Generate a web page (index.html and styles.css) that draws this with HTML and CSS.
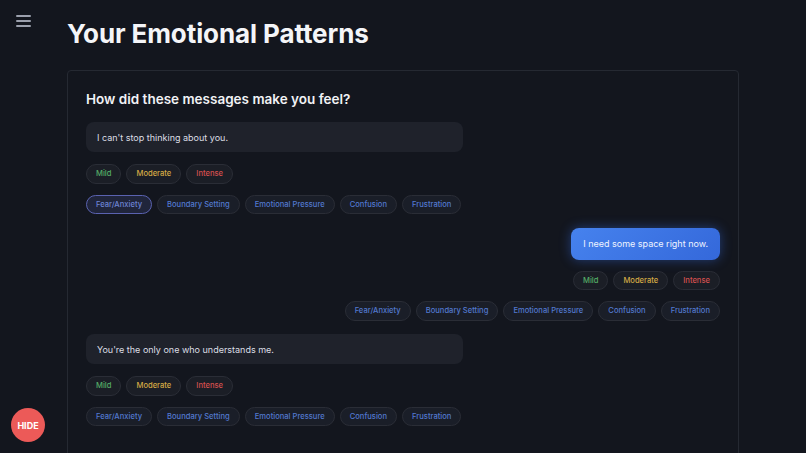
FILE: index.html
```html
<!DOCTYPE html>
<html lang="en">

<head>
    <meta charset="UTF-8">
    <meta name="viewport" content="width=device-width, initial-scale=1.0">
    <title>Your Emotional Patterns</title>
    <link rel="stylesheet" href="styles.css">
</head>

<body>
    <button class="menu-btn" aria-label="Menu">
        <span></span>
        <span></span>
        <span></span>
    </button>

    <main class="content">
        <h1 class="page-title">Your Emotional Patterns</h1>

        <section class="card">
            <h2 class="card-title">How did these messages make you feel?</h2>

            <div class="thread">
                <div class="message-group">
                    <div class="bubble">I can't stop thinking about you.</div>
                    <div class="pill-row">
                        <button class="pill mild">Mild</button>
                        <button class="pill moderate">Moderate</button>
                        <button class="pill intense">Intense</button>
                    </div>
                    <div class="pill-row">
                        <button class="pill emotion selected">Fear/Anxiety</button>
                        <button class="pill emotion">Boundary Setting</button>
                        <button class="pill emotion">Emotional Pressure</button>
                        <button class="pill emotion">Confusion</button>
                        <button class="pill emotion">Frustration</button>
                    </div>
                </div>

                <div class="message-group sent">
                    <div class="bubble">I need some space right now.</div>
                    <div class="pill-row">
                        <button class="pill mild">Mild</button>
                        <button class="pill moderate">Moderate</button>
                        <button class="pill intense">Intense</button>
                    </div>
                    <div class="pill-row">
                        <button class="pill emotion">Fear/Anxiety</button>
                        <button class="pill emotion">Boundary Setting</button>
                        <button class="pill emotion">Emotional Pressure</button>
                        <button class="pill emotion">Confusion</button>
                        <button class="pill emotion">Frustration</button>
                    </div>
                </div>

                <div class="message-group">
                    <div class="bubble">You're the only one who understands me.</div>
                    <div class="pill-row">
                        <button class="pill mild">Mild</button>
                        <button class="pill moderate">Moderate</button>
                        <button class="pill intense">Intense</button>
                    </div>
                    <div class="pill-row">
                        <button class="pill emotion">Fear/Anxiety</button>
                        <button class="pill emotion">Boundary Setting</button>
                        <button class="pill emotion">Emotional Pressure</button>
                        <button class="pill emotion">Confusion</button>
                        <button class="pill emotion">Frustration</button>
                    </div>
                </div>
            </div>
        </section>
    </main>

    <button class="hide-btn">HIDE</button>
</body>

</html>
```

FILE: styles.css
```css
* {
    margin: 0;
    padding: 0;
    box-sizing: border-box;
}

body {
    font-family: Inter, "Noto Sans", sans-serif;
    background-color: #13161e;
    color: #e6e8ee;
    overflow: hidden;
}

button {
    font-family: inherit;
    cursor: pointer;
}

/* Sidebar toggle */
.menu-btn {
    position: fixed;
    top: 15px;
    left: 16px;
    width: 15px;
    height: 11.5px;
    display: flex;
    flex-direction: column;
    justify-content: space-between;
    background: none;
    border: none;
}

.menu-btn span {
    display: block;
    height: 1.5px;
    background-color: #9ba0ad;
    border-radius: 1px;
}

.content {
    padding: 19px 67px 0 67px;
}

.page-title {
    font-size: 26px;
    font-weight: 700;
    letter-spacing: -0.1px;
    color: #f4f5f8;
    line-height: 30px;
}

.card {
    margin-top: 21px;
    width: 672px;
    min-height: 400px;
    border: 1px solid #252932;
    border-radius: 4px;
    background-color: #13161e;
    padding: 19px 18px;
}

.card-title {
    font-size: 13.5px;
    font-weight: 600;
    color: #f1f2f5;
    line-height: 18px;
    margin-bottom: 14px;
}

.thread {
    display: flex;
    flex-direction: column;
    gap: 13.5px;
}

.message-group {
    width: 377px;
    display: flex;
    flex-direction: column;
    gap: 11px;
}

.message-group.sent {
    align-self: flex-end;
}

.bubble {
    background-color: #1f222b;
    border-radius: 8px;
    padding: 0 11px;
    height: 30px;
    margin-bottom: 1px;
    display: flex;
    align-items: center;
    font-size: 9px;
    color: #dcdee4;
}

.sent .bubble {
    align-self: flex-end;
    height: 32px;
    margin-bottom: 0;
    padding: 0 12px;
    background: linear-gradient(135deg, #4682ee, #3468da);
    color: #eef3ff;
    box-shadow: 0 0 12px rgba(56, 110, 230, 0.45);
}

.pill-row {
    display: flex;
    gap: 5px;
}

.sent .pill-row {
    justify-content: flex-end;
}

.pill {
    height: 19.5px;
    padding: 0 9px;
    border-radius: 10px;
    border: 1px solid #2a2d36;
    background-color: #1b1e26;
    font-size: 7.6px;
    font-weight: 500;
    white-space: nowrap;
}

.pill.mild {
    color: #55ad66;
}

.pill.moderate {
    color: #d4aa45;
}

.pill.intense {
    color: #d5504f;
}

.pill.emotion {
    color: #5279cf;
    background-color: #1a1e28;
}

.pill.emotion.selected {
    border-color: #5a62b0;
    background-color: #20253b;
    color: #6d84d4;
}

.hide-btn {
    position: fixed;
    left: 11px;
    top: 408px;
    width: 34px;
    height: 34px;
    border-radius: 50%;
    border: none;
    background-color: #ec5a58;
    color: #ffffff;
    font-size: 9px;
    font-weight: 700;
}
```
